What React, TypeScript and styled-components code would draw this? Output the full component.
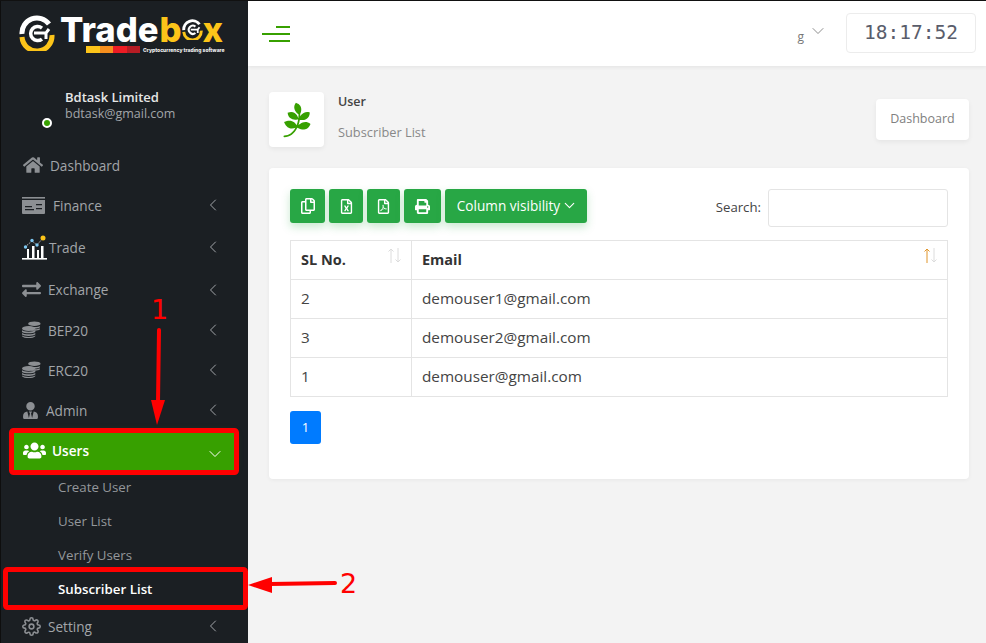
import React from "react";
import styled, { createGlobalStyle } from "styled-components";
import { FaHome, FaExchangeAlt, FaUserTie, FaUsers, FaPagelines, FaRegCopy, FaRegFileExcel, FaRegFilePdf, FaPrint } from "react-icons/fa";
import { FiSettings } from "react-icons/fi";
import { ChevronLeft, ChevronDown } from "lucide-react";

const Global = createGlobalStyle`
  html, body { margin: 0; padding: 0; height: 100%; overflow: hidden; }
  body { font-family: "Open Sans", "Noto Sans", sans-serif; background: #f3f3f3; }
  * { box-sizing: border-box; }
`;

const Page = styled.div`
  position: relative;
  width: 986px;
  height: 643px;
  display: flex;
  overflow: hidden;
  background: #f3f3f3;
  border-top: 1px solid #111;
`;
const Sidebar = styled.aside`
  width: 248px;
  flex: none;
  background: #1b1f23;
  border-left: 1px solid #0e0e0e;
  display: flex;
  flex-direction: column;
  overflow: hidden;
`;
const LogoRow = styled.div`
  height: 60px;
  flex: none;
  padding: 14px 0 0 18px;
  display: flex;
  align-items: flex-start;
`;
const LogoWrap = styled.div`
  display: flex;
  flex-direction: column;
  margin-left: 5px;
`;
const LogoWord = styled.div`
  display: flex;
  align-items: center;
  height: 29px;
  font-family: Inter, sans-serif;
  font-weight: 800;
  font-size: 34.6px;
  line-height: 29px;
  letter-spacing: 0;
  color: #fff;
`;
const LogoYellow = styled.span`
  color: #fcc419;
  display: flex;
  align-items: center;
  margin-left: 1px;
`;
const LogoSub = styled.div`
  display: flex;
  align-items: center;
  gap: 3px;
  margin: 2px 0 0 26px;
  font-family: Inter, sans-serif;
  font-weight: 800;
  font-size: 5px;
  line-height: 6px;
  color: #eee;
  white-space: nowrap;
`;
const StripeBar = styled.div`
  display: flex;
  width: 54px;
  height: 7px;
`;
const Stripe = styled.i<{ $c: string }>`
  flex: 1;
  background: ${(p) => p.$c};
`;
const Profile = styled.div`
  position: relative;
  height: 85px;
  flex: none;
  padding: 28px 0 0 64px;
`;
const ProfileName = styled.div`
  font-size: 13px;
  line-height: 16px;
  font-weight: 600;
  color: #e6e6e6;
`;
const ProfileMail = styled.div`
  font-size: 12.5px;
  line-height: 17px;
  color: #a2a5a9;
`;
const Dot = styled.span`
  position: absolute;
  left: 41px;
  top: 57px;
  width: 10px;
  height: 10px;
  border-radius: 50%;
  background: #37a000;
  border: 2px solid #fff;
`;
const Item = styled.div<{ $h: number; $gap: number }>`
  height: ${(p) => p.$h}px;
  flex: none;
  display: flex;
  align-items: center;
  padding: 0 25px 2px 21px;
  gap: ${(p) => p.$gap}px;
  font-size: 13.6px;
  font-weight: 500;
  color: #a2a5a9;
`;
const ActiveItem = styled.div`
  height: 37px;
  flex: none;
  margin: 2px 14px 1px 13px;
  padding: 0 9px 3px 8px;
  display: flex;
  align-items: center;
  gap: 6px;
  background: #37a000;
  box-shadow: 0 0 8px rgba(55, 160, 0, 0.4);
  font-size: 13.6px;
  font-weight: 600;
  color: #fff;
`;
const DownChev = styled.span`
  display: inline-flex;
  margin-top: 8px;
`;
const ItemLabel = styled.span`
  flex: 1;
  white-space: nowrap;
`;
const IconBox = styled.span<{ $w: number }>`
  width: ${(p) => p.$w}px;
  display: inline-flex;
  justify-content: center;
  align-items: center;
  flex: none;
`;
const SubItem = styled.div<{ $active?: boolean }>`
  height: 34px;
  flex: none;
  display: flex;
  align-items: center;
  padding: 0 0 2px 57px;
  font-size: 13.3px;
  font-weight: ${(p) => (p.$active ? 600 : 500)};
  color: ${(p) => (p.$active ? "#fff" : "#94979b")};
`;
const Main = styled.main`
  flex: 1;
  min-width: 0;
  display: flex;
  flex-direction: column;
`;
const Header = styled.header`
  height: 65px;
  flex: none;
  background: #fff;
  box-shadow: 0 1px 4px rgba(0, 0, 0, 0.07);
  display: flex;
  align-items: center;
  padding: 0 10px 0 14px;
`;
const Burger = styled.div`
  width: 28px;
  display: flex;
  flex-direction: column;
  align-items: flex-end;
  gap: 5px;
  flex: none;
`;
const BurgerLine = styled.i<{ $w: number }>`
  display: block;
  height: 2px;
  width: ${(p) => p.$w}px;
  background: #37a000;
`;
const HeaderSpacer = styled.div`
  flex: 1;
`;
const LangBox = styled.div`
  display: flex;
  align-items: center;
  gap: 4px;
  margin-right: 18px;
  font-size: 12px;
  color: #777;
  height: 30px;
`;
const LangG = styled.span`
  padding-top: 6px;
`;
const LangChev = styled.span`
  display: inline-flex;
  margin-top: -5px;
`;
const Clock = styled.div`
  width: 130px;
  height: 40px;
  margin-top: -2px;
  border: 1px solid #ececec;
  border-radius: 4px;
  display: flex;
  align-items: center;
  justify-content: center;
  font-family: "DejaVu Sans Mono", monospace;
  font-size: 19.5px;
  letter-spacing: 0;
  color: #5a5d6b;
  white-space: pre;
`;
const Content = styled.div`
  padding: 26px 17px 0 21px;
  display: flex;
  flex-direction: column;
`;
const PageHead = styled.div`
  display: flex;
  align-items: center;
  height: 55px;
`;
const LeafBox = styled.div`
  width: 55px;
  height: 55px;
  flex: none;
  background: #fff;
  border-radius: 4px;
  box-shadow: 0 2px 5px rgba(0, 0, 0, 0.06);
  display: flex;
  align-items: center;
  justify-content: center;
  color: #37a000;
  font-size: 36px;
`;
const HeadText = styled.div`
  flex: 1;
  margin-left: 14px;
  height: 55px;
  display: flex;
  flex-direction: column;
  justify-content: space-between;
  padding: 2px 0 7px;
`;
const HeadTitle = styled.div`
  font-size: 12.5px;
  line-height: 16px;
  font-weight: 600;
  color: #444;
`;
const HeadSub = styled.div`
  font-size: 12.8px;
  line-height: 16px;
  color: #888;
`;
const Crumb = styled.div`
  width: 93px;
  height: 41px;
  padding-bottom: 2px;
  background: #fff;
  border-radius: 4px;
  box-shadow: 0 2px 5px rgba(0, 0, 0, 0.06);
  display: flex;
  align-items: center;
  justify-content: center;
  font-size: 12.5px;
  color: #808080;
`;
const Card = styled.section`
  margin-top: 21px;
  height: 311px;
  background: #fff;
  border-radius: 4px;
  box-shadow: 0 1px 4px rgba(0, 0, 0, 0.05);
  padding: 21px 21px 0;
`;
const ToolRow = styled.div`
  display: flex;
  align-items: flex-start;
  justify-content: space-between;
  height: 51px;
`;
const Buttons = styled.div`
  display: flex;
  gap: 4px;
`;
const ToolButton = styled.div<{ $w?: number }>`
  height: 34px;
  width: ${(p) => (p.$w ? `${p.$w}px` : "142px")};
  padding: ${(p) => (p.$w ? "0" : "0 0 2px 3px")};
  background: #28a745;
  border-radius: 3px;
  box-shadow: 0 4px 8px rgba(40, 167, 69, 0.25);
  display: flex;
  align-items: center;
  justify-content: center;
  gap: 1px;
  color: #fff;
  font-size: 13.6px;
  white-space: nowrap;
`;
const SearchWrap = styled.label`
  display: flex;
  align-items: center;
  gap: 7px;
  font-size: 13.2px;
  color: #444;
`;
const SearchLabel = styled.span`
  margin-top: -2px;
`;
const SearchInput = styled.div`
  width: 180px;
  height: 38px;
  border: 1px solid #e4e4e4;
  border-radius: 3px;
  background: #fff;
`;
const Table = styled.table`
  width: 100%;
  border-collapse: collapse;
  table-layout: fixed;
  color: #333;
  font-size: 14.5px;
`;
const Th = styled.th<{ $w?: number }>`
  position: relative;
  height: 39px;
  width: ${(p) => (p.$w ? `${p.$w}px` : "auto")};
  border: 1px solid #e4e4e4;
  padding: 0 10px 2px;
  text-align: left;
  font-weight: 700;
  color: #333;
`;
const Td = styled.td`
  height: 39px;
  border: 1px solid #e4e4e4;
  padding: 0 10px 2px;
  font-size: 15.3px;
  color: #444;
`;
const SortIcon = styled.svg`
  position: absolute;
  right: 9px;
  top: 6px;
`;
const Pager = styled.div`
  margin-top: 14px;
  width: 31px;
  height: 33px;
  padding-bottom: 2px;
  border-radius: 3px;
  background: #007bff;
  color: #fff;
  font-size: 13px;
  display: flex;
  align-items: center;
  justify-content: center;
`;
const Overlay = styled.svg`
  position: absolute;
  left: 0;
  top: -1px;
  pointer-events: none;
`;
const Mark = styled.span<{ $x: number; $y: number }>`
  position: absolute;
  left: ${(p) => p.$x}px;
  top: ${(p) => p.$y}px;
  font-family: "DejaVu Sans", sans-serif;
  font-size: 27px;
  line-height: 30px;
  color: #f00;
`;

const Ring = ({ size, c1, c2 }: { size: number; c1: string; c2: string }) => (
  <svg width={size} height={size} viewBox="0 0 36 36" fill="none">
    <path d="M3 19A15 15 0 0 1 30 9" stroke={c1} strokeWidth="5" />
    <path d="M33 20A15 15 0 0 1 3 22" stroke={c2} strokeWidth="5" />
    <path d="M23 13A7 7 0 1 0 23 24" stroke={c1} strokeWidth="3.5" />
    <path d="M15 18H27L30 14M27 18V24" stroke={c1} strokeWidth="3" />
  </svg>
);
const CardIcon = () => (
  <svg width="24" height="17" viewBox="0 0 24 17" fill="#8c8f93">
    <rect x="0" y="0" width="23" height="1.6" />
    <path d="M0 3h23v13a1 1 0 0 1-1 1H1a1 1 0 0 1-1-1z" />
    <path d="M3 9h7v1.3H3zM14 7h6v1.3h-6zM3 12h9v1.3H3zM14 11h6v1.3h-6z" fill="#1b1f23" />
  </svg>
);
const ChartIcon = () => (
  <svg width="26" height="25" viewBox="0 0 26 25" fill="none">
    <path d="M3 12L10 6L15 10L21 3" stroke="#ddd" strokeWidth="0.8" strokeDasharray="1.5 1" />
    <circle cx="3.5" cy="12" r="1.7" fill="#7ec8f2" />
    <circle cx="10" cy="5.5" r="1.7" fill="#7ec8f2" />
    <circle cx="15" cy="10" r="1.7" fill="#7ec8f2" />
    <circle cx="21" cy="3" r="2.5" fill="#fcc419" />
    <path d="M5 14h2v9H5zM10 11h2.5v12H10zM15 15h2v8h-2zM19 11h2.5v12H19z" fill="#fff" />
    <rect x="0" y="23" width="25" height="1.6" fill="#fff" />
  </svg>
);
const CoinsIcon = () => (
  <svg width="20" height="18" viewBox="0 0 20 18" fill="#8c8f93">
    <ellipse cx="13" cy="2.4" rx="6.5" ry="2.4" />
    <path d="M6.5 4.8c2 1.4 9 1.4 11.5 0.4 1.4-0.5 1.5 1-.2 1.6-3 1-6 .6-8.2.6zM9 8.2c3 .4 7 .2 9-.7 1.4-.5 1.4 1 0 1.5-2 .7-5 .8-8 .7z" />
    <ellipse cx="7" cy="7.4" rx="7" ry="2.6" />
    <path d="M0 9.3c2 1.9 12 1.9 14 0v1.7c-2 1.9-12 1.9-14 0zM0 12.1c2 1.9 12 1.9 14 0v1.7c-2 1.9-12 1.9-14 0zM0 14.9c2 1.9 12 1.9 14 0v.6c-2 2.6-12 2.6-14 0z" />
  </svg>
);
const Sort = ({ active }: { active?: boolean }) => (
  <SortIcon width="15" height="17" viewBox="0 0 15 17" fill="none">
    <path d="M4 16V2M1.5 4.5L4 2L6.5 4.5" stroke={active ? "#e0952b" : "#dcdcdc"} strokeWidth="1" />
    <path d="M11 1V15M8.5 12.5L11 15L13.5 12.5" stroke="#dcdcdc" strokeWidth="1" />
  </SortIcon>
);

const Left = () => <ChevronLeft size={20} strokeWidth={1.2} color="#a2a5a9" />;

const menuTop = [
  { label: "Dashboard", h: 40, gap: 6, w: 22, icon: <FaHome size={20} color="#8c8f93" /> },
  { label: "Finance", h: 40, gap: 7, w: 24, icon: <CardIcon />, arrow: true },
  { label: "Trade", h: 44, gap: 1, w: 26, icon: <ChartIcon />, arrow: true },
  { label: "Exchange", h: 41, gap: 7, w: 19, icon: <FaExchangeAlt size={19} color="#8c8f93" />, arrow: true },
  { label: "BEP20", h: 40, gap: 7, w: 19, icon: <CoinsIcon />, arrow: true },
  { label: "ERC20", h: 40, gap: 7, w: 19, icon: <CoinsIcon />, arrow: true },
  { label: "Admin", h: 40, gap: 7, w: 17, icon: <FaUserTie size={17} color="#8c8f93" />, arrow: true },
];

export default function App() {
  return (
    <>
      <Global />
      <Page>
        <Sidebar>
          <LogoRow>
            <Ring size={36} c1="#fff" c2="#fcc419" />
            <LogoWrap>
              <LogoWord>
                Trade
                <LogoYellow>
                  b
                  <Ring size={21} c1="#fff" c2="#fcc419" />
                  x
                </LogoYellow>
              </LogoWord>
              <LogoSub>
                <StripeBar>
                  <Stripe $c="#fcc419" />
                  <Stripe $c="#f78f1e" />
                  <Stripe $c="#ed1c24" />
                  <Stripe $c="#b71c24" />
                </StripeBar>
                Cryptocurrency trading software
              </LogoSub>
            </LogoWrap>
          </LogoRow>
          <Profile>
            <ProfileName>Bdtask Limited</ProfileName>
            <ProfileMail>bdtask@gmail.com</ProfileMail>
            <Dot />
          </Profile>
          {menuTop.map((m) => (
            <Item key={m.label} $h={m.h} $gap={m.gap}>
              <IconBox $w={m.w}>{m.icon}</IconBox>
              <ItemLabel>{m.label}</ItemLabel>
              {m.arrow && <Left />}
            </Item>
          ))}
          <ActiveItem>
            <IconBox $w={24}>
              <FaUsers size={23} color="#fff" />
            </IconBox>
            <ItemLabel>Users</ItemLabel>
            <DownChev>
              <ChevronDown size={20} strokeWidth={1.2} color="#fff" />
            </DownChev>
          </ActiveItem>
          <SubItem>Create User</SubItem>
          <SubItem>User List</SubItem>
          <SubItem>Verify Users</SubItem>
          <SubItem $active>Subscriber List</SubItem>
          <Item $h={40} $gap={7}>
            <IconBox $w={19}>
              <FiSettings size={19} color="#8c8f93" />
            </IconBox>
            <ItemLabel>Setting</ItemLabel>
            <Left />
          </Item>
        </Sidebar>
        <Main>
          <Header>
            <Burger>
              <BurgerLine $w={14} />
              <BurgerLine $w={28} />
              <BurgerLine $w={21} />
            </Burger>
            <HeaderSpacer />
            <LangBox>
              <LangG>g</LangG>
              <LangChev>
                <ChevronDown size={20} strokeWidth={1} color="#777" />
              </LangChev>
            </LangBox>
            <Clock>18:17:52</Clock>
          </Header>
          <Content>
            <PageHead>
              <LeafBox>
                <FaPagelines />
              </LeafBox>
              <HeadText>
                <HeadTitle>User</HeadTitle>
                <HeadSub>Subscriber List</HeadSub>
              </HeadText>
              <Crumb>Dashboard</Crumb>
            </PageHead>
            <Card>
              <ToolRow>
                <Buttons>
                  <ToolButton $w={35}>
                    <FaRegCopy size={16} />
                  </ToolButton>
                  <ToolButton $w={34}>
                    <FaRegFileExcel size={15} />
                  </ToolButton>
                  <ToolButton $w={33}>
                    <FaRegFilePdf size={15} />
                  </ToolButton>
                  <ToolButton $w={37}>
                    <FaPrint size={15} />
                  </ToolButton>
                  <ToolButton>
                    Column visibility
                    <ChevronDown size={17} strokeWidth={1.6} />
                  </ToolButton>
                </Buttons>
                <SearchWrap>
                  <SearchLabel>Search:</SearchLabel>
                  <SearchInput />
                </SearchWrap>
              </ToolRow>
              <Table>
                <thead>
                  <tr>
                    <Th $w={121}>
                      SL No.
                      <Sort />
                    </Th>
                    <Th>
                      Email
                      <Sort active />
                    </Th>
                  </tr>
                </thead>
                <tbody>
                  {[
                    ["2", "demouser1@gmail.com"],
                    ["3", "demouser2@gmail.com"],
                    ["1", "demouser@gmail.com"],
                  ].map(([n, e]) => (
                    <tr key={n}>
                      <Td>{n}</Td>
                      <Td>{e}</Td>
                    </tr>
                  ))}
                </tbody>
              </Table>
              <Pager>1</Pager>
            </Card>
          </Content>
        </Main>
        <Overlay width="986" height="643" viewBox="0 0 986 643" fill="none">
          <rect x="11.5" y="430.5" width="225" height="42" rx="2" stroke="#f00" strokeWidth="5" />
          <rect x="5.5" y="569.5" width="240" height="38" rx="2" stroke="#f00" strokeWidth="5" />
          <path d="M159 330L158 402" stroke="#f00" strokeWidth="4" strokeLinecap="round" />
          <path d="M151 400H165L157 425Z" fill="#f00" />
          <path d="M335 583L270 584" stroke="#f00" strokeWidth="4" strokeLinecap="round" />
          <path d="M248 585L272 577V593Z" fill="#f00" />
        </Overlay>
        <Mark $x={151} $y={294}>1</Mark>
        <Mark $x={340} $y={568}>2</Mark>
      </Page>
    </>
  );
}
